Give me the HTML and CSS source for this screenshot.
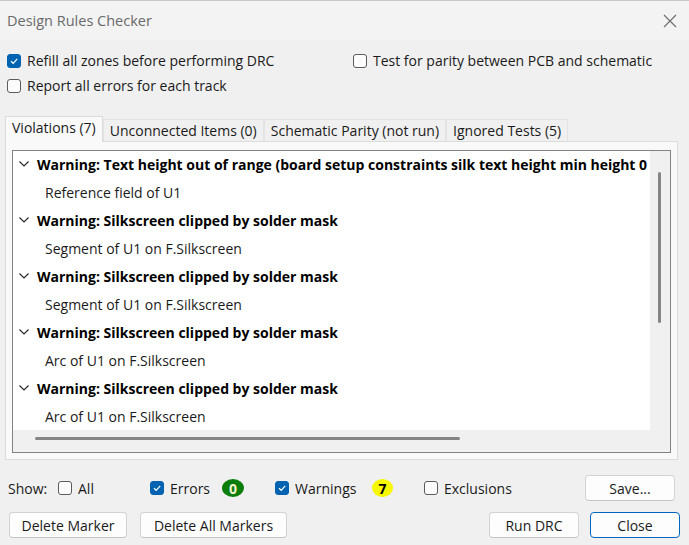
FILE: index.html
```html
<!DOCTYPE html>
<html>
<head>
<meta charset="utf-8">
<link rel="stylesheet" href="styles.css">
</head>
<body>
<div class="window">
  <div class="titlebar">
    <span class="title">Design Rules Checker</span>
    <svg class="close-x" width="14" height="14" viewBox="0 0 14 14"><path d="M1 1 L13 13 M13 1 L1 13" stroke="#6b6b6b" stroke-width="1.1" fill="none"/></svg>
  </div>

  <div class="options">
    <label class="opt"><span class="cb on"><svg width="10" height="10" viewBox="0 0 10 10"><path d="M2 5.2 L4.2 7.3 L8.2 2.8" stroke="#fff" stroke-width="1.2" fill="none"/></svg></span>Refill all zones before performing DRC</label>
    <label class="opt"><span class="cb"></span>Test for parity between PCB and schematic</label>
    <label class="opt"><span class="cb"></span>Report all errors for each track</label>
  </div>

  <div class="tabs">
    <div class="tab active">Violations (7)</div>
    <div class="tab">Unconnected Items (0)</div>
    <div class="tab">Schematic Parity (not run)</div>
    <div class="tab">Ignored Tests (5)</div>
  </div>

  <div class="panel">
    <div class="list">
      <div class="list-body">
        <div class="rows">
          <div class="row head"><svg class="chev" width="10" height="6" viewBox="0 0 10 6"><path d="M0.5 0.5 L5 5 L9.5 0.5" stroke="#222" stroke-width="1.1" fill="none"/></svg><span class="clip">Warning: Text height out of range (board setup constraints silk text height min height 0</span></div>
          <div class="row item">Reference field of U1</div>
          <div class="row head"><svg class="chev" width="10" height="6" viewBox="0 0 10 6"><path d="M0.5 0.5 L5 5 L9.5 0.5" stroke="#222" stroke-width="1.1" fill="none"/></svg>Warning: Silkscreen clipped by solder mask</div>
          <div class="row item">Segment of U1 on F.Silkscreen</div>
          <div class="row head"><svg class="chev" width="10" height="6" viewBox="0 0 10 6"><path d="M0.5 0.5 L5 5 L9.5 0.5" stroke="#222" stroke-width="1.1" fill="none"/></svg>Warning: Silkscreen clipped by solder mask</div>
          <div class="row item">Segment of U1 on F.Silkscreen</div>
          <div class="row head"><svg class="chev" width="10" height="6" viewBox="0 0 10 6"><path d="M0.5 0.5 L5 5 L9.5 0.5" stroke="#222" stroke-width="1.1" fill="none"/></svg>Warning: Silkscreen clipped by solder mask</div>
          <div class="row item">Arc of U1 on F.Silkscreen</div>
          <div class="row head"><svg class="chev" width="10" height="6" viewBox="0 0 10 6"><path d="M0.5 0.5 L5 5 L9.5 0.5" stroke="#222" stroke-width="1.1" fill="none"/></svg>Warning: Silkscreen clipped by solder mask</div>
          <div class="row item">Arc of U1 on F.Silkscreen</div>
        </div>
        <div class="vscroll"><div class="vthumb"></div></div>
      </div>
      <div class="hscroll"><div class="hthumb"></div></div>
    </div>
  </div>

  <div class="showbar">
    <span class="show-label">Show:</span>
    <label class="chk g-all"><span class="cb"></span>All</label>
    <label class="chk g-err"><span class="cb on"><svg width="10" height="10" viewBox="0 0 10 10"><path d="M2 5.2 L4.2 7.3 L8.2 2.8" stroke="#fff" stroke-width="1.2" fill="none"/></svg></span>Errors</label>
    <span class="badge green">0</span>
    <label class="chk g-warn"><span class="cb on"><svg width="10" height="10" viewBox="0 0 10 10"><path d="M2 5.2 L4.2 7.3 L8.2 2.8" stroke="#fff" stroke-width="1.2" fill="none"/></svg></span>Warnings</label>
    <span class="badge yellow">7</span>
    <label class="chk g-excl"><span class="cb"></span>Exclusions</label>
    <button class="btn save">Save...</button>
  </div>

  <div class="buttons">
    <button class="btn b-del">Delete Marker</button>
    <button class="btn b-delall">Delete All Markers</button>
    <button class="btn b-run">Run DRC</button>
    <button class="btn b-close">Close</button>
  </div>
</div>
</body>
</html>
```

FILE: styles.css
```css
html, body {
  margin: 0;
  padding: 0;
}
body {
  width: 689px;
  height: 545px;
  overflow: hidden;
  background: #f0f0f0;
  font-family: "Open Sans", "Noto Sans", sans-serif;
  font-size: 14px;
  color: #1a1a1a;
}
.window {
  width: 689px;
  height: 545px;
  box-sizing: border-box;
  border-top: 1px solid #c8c8c8;
  display: flex;
  flex-direction: column;
}
.titlebar {
  height: 39px;
  display: flex;
  align-items: center;
  justify-content: space-between;
  padding: 0 12px 0 7px;
  background: #f3f3f3;
}
.title {
  color: #6a6a6a;
  font-size: 14.5px;
}
.options {
  margin-top: 8px;
  display: grid;
  grid-template-columns: 346px 1fr;
  grid-auto-rows: 25px;
  padding-left: 7px;
}
.opt {
  display: flex;
  align-items: center;
  white-space: nowrap;
}
.cb {
  width: 14px;
  height: 14px;
  box-sizing: border-box;
  border: 1px solid #5c5c5c;
  border-radius: 3px;
  background: #fbfbfb;
  margin-right: 6px;
  display: inline-flex;
  align-items: center;
  justify-content: center;
  flex: none;
}
.cb.on {
  background: #0063b1;
  border-color: #0063b1;
}
.tabs {
  margin-top: 18px;
  padding-left: 5px;
  display: flex;
  align-items: flex-end;
  height: 25px;
  position: relative;
  z-index: 1;
}
.tab {
  height: 22px;
  line-height: 21px;
  padding: 0 6px;
  background: #f0f0f0;
  border: 1px solid #e3e3e3;
  border-bottom: none;
  box-sizing: border-box;
  white-space: nowrap;
}
.tab.active {
  height: 26px;
  line-height: 22px;
  background: #f9f9f9;
  border-color: #dcdcdc;
  margin-bottom: -1px;
}
.panel {
  margin: 0 11px 0 5px;
  height: 319px;
  box-sizing: border-box;
  background: #f9f9f9;
  border: 1px solid #dcdcdc;
  padding: 8px 6px 0 6px;
}
.list {
  height: 303px;
  box-sizing: border-box;
  border: 1px solid #828282;
  background: #f0f0f0;
  display: flex;
  flex-direction: column;
}
.list-body {
  display: flex;
  height: 279px;
}
.rows {
  flex: 1;
  min-width: 0;
  background: #fff;
  overflow: hidden;
  white-space: nowrap;
}
.row {
  height: 28px;
  line-height: 28px;
}
.row.head {
  font-weight: bold;
  color: #000;
  padding-left: 6px;
}
.chev {
  margin-right: 8px;
  vertical-align: 3px;
}
.row.item {
  padding-left: 32px;
}
.vscroll {
  width: 20px;
  position: relative;
  background: #f0f0f0;
}
.vthumb {
  position: absolute;
  left: 8px;
  top: 21px;
  width: 3px;
  height: 151px;
  background: #858585;
  border-radius: 2px;
}
.hscroll {
  flex: 1;
  position: relative;
}
.hthumb {
  position: absolute;
  left: 22px;
  top: 7px;
  width: 425px;
  height: 3px;
  background: #858585;
  border-radius: 2px;
}
.showbar {
  height: 28px;
  margin-top: 14px;
  display: flex;
  align-items: center;
  padding-left: 8px;
}
.show-label {
  width: 50px;
  flex: none;
}
.chk {
  display: flex;
  align-items: center;
  white-space: nowrap;
  flex: none;
}
.g-all { width: 92px; }
.g-err { width: 72px; }
.g-warn { width: 97px; }
.g-excl { width: 120px; }
.badge {
  width: 22px;
  height: 18px;
  border-radius: 50%;
  font-weight: bold;
  display: inline-flex;
  align-items: center;
  justify-content: center;
  font-size: 14px;
  flex: none;
}
.badge.green {
  background: #0a7d0a;
  color: #f4f4d0;
  margin-right: 31px;
}
.badge.yellow {
  background: #f7f700;
  color: #000;
  width: 21px;
  margin-right: 31px;
}
.btn {
  font-family: inherit;
  font-size: 14px;
  color: #1a1a1a;
  height: 26px;
  box-sizing: border-box;
  background: #fdfdfd;
  border: 1px solid #d3d3d3;
  border-bottom-color: #c4c4c4;
  border-radius: 4px;
  padding: 0;
}
.save {
  margin-left: auto;
  margin-right: 14px;
  width: 90px;
}
.buttons {
  margin-top: 10px;
  display: flex;
  align-items: center;
  padding-left: 9px;
}
.b-del { width: 118px; }
.b-delall { width: 147px; margin-left: 13px; }
.b-run { width: 90px; margin-left: auto; }
.b-close {
  width: 90px;
  margin-left: 11px;
  margin-right: 9px;
  border: 1px solid #0067c0;
}
```
